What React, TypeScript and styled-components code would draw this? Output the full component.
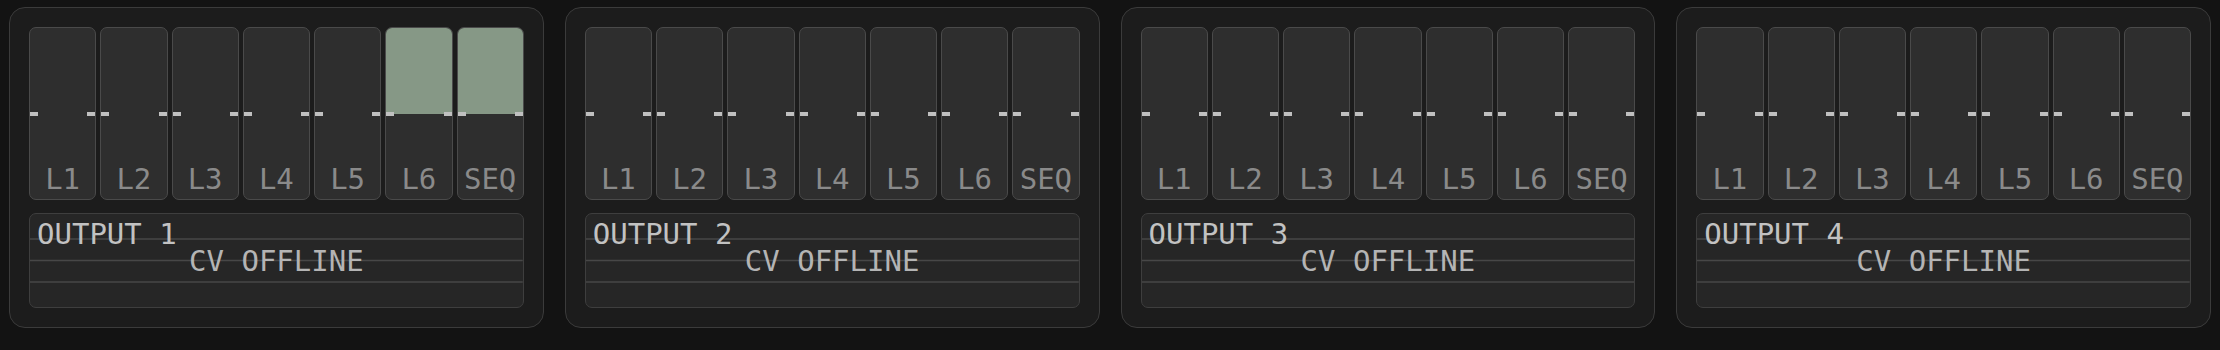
import React from "react";
import styled, { createGlobalStyle } from "styled-components";

const GlobalStyle = createGlobalStyle`
  html, body { margin: 0; padding: 0; background: #131313; }
  body { font-family: "DejaVu Sans Mono", "Liberation Mono", monospace; }
`;

const Row = styled.div`
  display: flex;
  gap: 21px;
  padding: 7px 9px;
`;

const Panel = styled.section`
  flex: 1;
  box-sizing: border-box;
  height: 321px;
  background: #1c1c1c;
  border: 1px solid #3b3b3b;
  border-radius: 16px;
  padding: 19px;
  display: flex;
  flex-direction: column;
  gap: 13px;
`;

const SliderRow = styled.div`
  display: grid;
  grid-template-columns: repeat(7, 1fr);
  gap: 4px;
  height: 173px;
`;

const Slider = styled.div`
  position: relative;
  box-sizing: border-box;
  border: 1px solid #4a4a4a;
  border-radius: 7px;
  background: #2e2e2e;
  overflow: hidden;
  display: flex;
  flex-direction: column;
`;

const Fill = styled.div<{ $active: boolean }>`
  height: 50%;
  flex: none;
  background: ${(p) => (p.$active ? "#869886" : "transparent")};
`;

const Tick = styled.span<{ $side: "left" | "right" }>`
  position: absolute;
  top: calc(50% - 2px);
  ${(p) => p.$side}: 0;
  width: 8px;
  height: 4px;
  background: #c0c0c0;
`;

const Label = styled.div`
  flex: 1;
  display: flex;
  align-items: flex-end;
  justify-content: center;
  padding-bottom: 5px;
  font-family: "DejaVu Sans Mono", "Liberation Mono", monospace;
  font-size: 29px;
  line-height: 29px;
  color: #8a8a8a;
`;

const Scope = styled.div`
  position: relative;
  box-sizing: border-box;
  height: 95px;
  border: 1px solid #3e3e3e;
  border-radius: 7px;
  background: #262626;
  overflow: hidden;
`;

const Grid = styled.svg`
  display: block;
  width: 100%;
  height: 100%;
`;

const Overlay = styled.div`
  position: absolute;
  inset: 0;
  padding: 7px 7px 0 7px;
  display: flex;
  flex-direction: column;
  font-family: "DejaVu Sans Mono", "Liberation Mono", monospace;
  font-size: 29px;
  line-height: 27px;
`;

const Title = styled.div`
  color: #c2c2c2;
  align-self: flex-start;
`;

const Status = styled.div`
  color: #b4b4b4;
  align-self: center;
`;

const LABELS = ["L1", "L2", "L3", "L4", "L5", "L6", "SEQ"];

type OutputProps = { index: number; active: string[] };

function OutputPanel({ index, active }: OutputProps) {
  return (
    <Panel>
      <SliderRow>
        {LABELS.map((l) => (
          <Slider key={l}>
            <Fill $active={active.includes(l)} />
            <Tick $side="left" />
            <Tick $side="right" />
            <Label>{l}</Label>
          </Slider>
        ))}
      </SliderRow>
      <Scope>
        <Grid preserveAspectRatio="none" viewBox="0 0 100 93">
          <line x1="0" x2="100" y1="25" y2="25" stroke="#474747" strokeWidth="1.6" vectorEffect="non-scaling-stroke" />
          <line x1="0" x2="100" y1="46.5" y2="46.5" stroke="#474747" strokeWidth="1.6" vectorEffect="non-scaling-stroke" />
          <line x1="0" x2="100" y1="68" y2="68" stroke="#474747" strokeWidth="1.6" vectorEffect="non-scaling-stroke" />
        </Grid>
        <Overlay>
          <Title>OUTPUT {index}</Title>
          <Status>CV OFFLINE</Status>
        </Overlay>
      </Scope>
    </Panel>
  );
}

export default function App() {
  return (
    <>
      <GlobalStyle />
      <Row>
        <OutputPanel index={1} active={["L6", "SEQ"]} />
        <OutputPanel index={2} active={[]} />
        <OutputPanel index={3} active={[]} />
        <OutputPanel index={4} active={[]} />
      </Row>
    </>
  );
}
